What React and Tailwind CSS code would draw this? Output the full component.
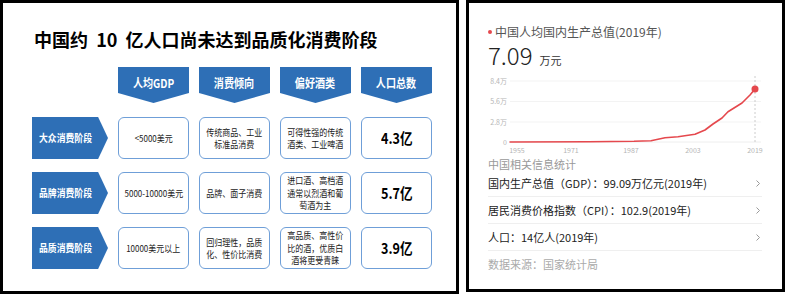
import React from "react";

const rows = [
  {
    label: "大众消费阶段",
    gdp: ["<5000美元"],
    trend: ["传统商品、工业", "标准品消费"],
    wine: ["可得性强的传统", "酒类、工业啤酒"],
    pop: "4.3亿",
  },
  {
    label: "品牌消费阶段",
    gdp: ["5000-10000美元"],
    trend: ["品牌、面子消费"],
    wine: ["进口酒、高档酒", "通常以烈酒和葡", "萄酒为主"],
    pop: "5.7亿",
  },
  {
    label: "品质消费阶段",
    gdp: ["10000美元以上"],
    trend: ["回归理性，品质", "化、性价比消费"],
    wine: ["高品质、高性价", "比的酒，优质白", "酒将更受青睐"],
    pop: "3.9亿",
  },
];

const heads = ["人均GDP", "消费倾向", "偏好酒类", "人口总数"];

function Sq({ children, className = "" }) {
  return (
    <span className={"inline-block whitespace-nowrap scale-x-[0.84] " + className}>
      {children}
    </span>
  );
}

function Lines({ lines }) {
  return (
    <Sq>
      {lines.map((l, i) => (
        <span key={i} className="block">
          {l}
        </span>
      ))}
    </Sq>
  );
}

function Cell({ children }) {
  return (
    <div className="h-[42px] rounded-[6px] border-[1.5px] border-[#6f9fd8] bg-white flex items-center justify-center text-center text-[9.5px] leading-[12.5px] text-[#222]">
      {children}
    </div>
  );
}

function Chevron() {
  return (
    <svg width="8" height="9" viewBox="0 0 8 9">
      <polyline points="2.5,1.5 5.5,4.5 2.5,7.5" fill="none" stroke="#999" strokeWidth="1" />
    </svg>
  );
}

function Slide() {
  return (
    <div className="w-[459px] h-[294px] border-[3px] border-black bg-white pt-[24px]">
      <h1 className="pl-[31px] text-[18px] leading-6 font-bold text-black whitespace-pre">
        中国约  10  亿人口尚未达到品质化消费阶段
      </h1>
      <div className="mt-[16px] ml-[29px] grid grid-cols-[76px_71px_71px_71px_71px] gap-x-[10px] gap-y-[13px]">
        <div />
        {heads.map((h) => (
          <div
            key={h}
            className="h-[36px] mb-[1px] bg-[#2e6fb6] [clip-path:polygon(0_0,100%_0,100%_72%,50%_100%,0_72%)] flex items-center justify-center pb-[4px] text-white font-bold text-[12px]"
          >
            <Sq>{h}</Sq>
          </div>
        ))}
        {rows.map((r) => (
          <React.Fragment key={r.label}>
            <div className="h-[42px] bg-[#2e6fb6] [clip-path:polygon(0_0,87%_0,100%_50%,87%_100%,0_100%)] flex items-center justify-center pr-[10px] text-white font-bold text-[10.5px]">
              <Sq>{r.label}</Sq>
            </div>
            <Cell>
              <Lines lines={r.gdp} />
            </Cell>
            <Cell>
              <Lines lines={r.trend} />
            </Cell>
            <Cell>
              <Lines lines={r.wine} />
            </Cell>
            <Cell>
              <Sq className="text-[15px] font-bold text-black">{r.pop}</Sq>
            </Cell>
          </React.Fragment>
        ))}
      </div>
    </div>
  );
}

function Chart() {
  const pts =
    "41,70 120,69.8 165,69.3 182,68.7 196,65.7 209,64.7 226,62.3 236,58 244,52 253,46 259,39.7 273,31 281,23 286,17";
  const yl = [
    ["8.4万", 9],
    ["5.6万", 29.5],
    ["2.8万", 50],
    ["0", 70],
  ];
  const xl = [
    ["1955", 48],
    ["1971", 102],
    ["1987", 162],
    ["2003", 224],
    ["2019", 286],
  ];
  return (
    <svg width="313" height="86" className="block">
      {[9, 29.5, 50].map((y) => (
        <line key={y} x1="41" x2="292" y1={y} y2={y} stroke="#f3f3f3" strokeWidth="1" />
      ))}
      <line x1="41" x2="292" y1="70" y2="70" stroke="#eeeeee" strokeWidth="1" />
      <line x1="286" x2="286" y1="4" y2="70" stroke="#cccccc" strokeWidth="1" strokeDasharray="2 2" />
      {yl.map(([t, y]) => (
        <text key={t} x="38" y={y + 2.5} textAnchor="end" fontSize="7" fill="#b5b5b5">
          {t}
        </text>
      ))}
      {xl.map(([t, x]) => (
        <text key={t} x={x} y="81" textAnchor="middle" fontSize="7" fill="#b5b5b5">
          {t}
        </text>
      ))}
      <polyline points={pts} fill="none" stroke="#e5484d" strokeWidth="1.6" strokeLinejoin="round" strokeLinecap="round" />
      <circle cx="286" cy="17" r="3.5" fill="#e5484d" />
    </svg>
  );
}

function StatsCard() {
  const items = [
    "国内生产总值（GDP）：99.09万亿元(2019年)",
    "居民消费价格指数（CPI）：102.9(2019年)",
    "人口：14亿人(2019年)",
  ];
  return (
    <div className="w-[319px] h-[292px] border-[3px] border-black bg-white flex flex-col">
      <div className="pt-[21px] pl-[19px] pr-[20px]">
        <div className="h-[16px] flex items-center gap-[3px] text-[12px] text-[#555]">
          <span className="w-[4px] h-[4px] rounded-full bg-[#e5484d]" />
          <span>中国人均国内生产总值(2019年)</span>
        </div>
        <div className="h-[28px] mt-[1px] flex items-end gap-[7px]">
          <span className="text-[24px] leading-[28px] font-light text-[#222]">7.09</span>
          <span className="text-[11px] leading-[18px] text-[#333]">万元</span>
        </div>
      </div>
      <div className="mt-[3px]">
        <Chart />
      </div>
      <div className="pl-[19px] pr-[20px]">
        <div className="h-[12px] flex items-center text-[11px] text-[#999]">中国相关信息统计</div>
        {items.map((t) => (
          <div
            key={t}
            className="h-[27px] border-b border-[#efefef] flex items-center justify-between text-[11px] text-[#222]"
          >
            <span>{t}</span>
            <Chevron />
          </div>
        ))}
        <div className="h-[26px] flex items-center text-[11px] text-[#aaa]">数据来源：国家统计局</div>
      </div>
    </div>
  );
}

export default function App() {
  return (
    <div className="w-[785px] h-[295px] bg-white flex gap-[7px] font-['Noto_Sans_CJK_SC',sans-serif]">
      <Slide />
      <StatsCard />
    </div>
  );
}
